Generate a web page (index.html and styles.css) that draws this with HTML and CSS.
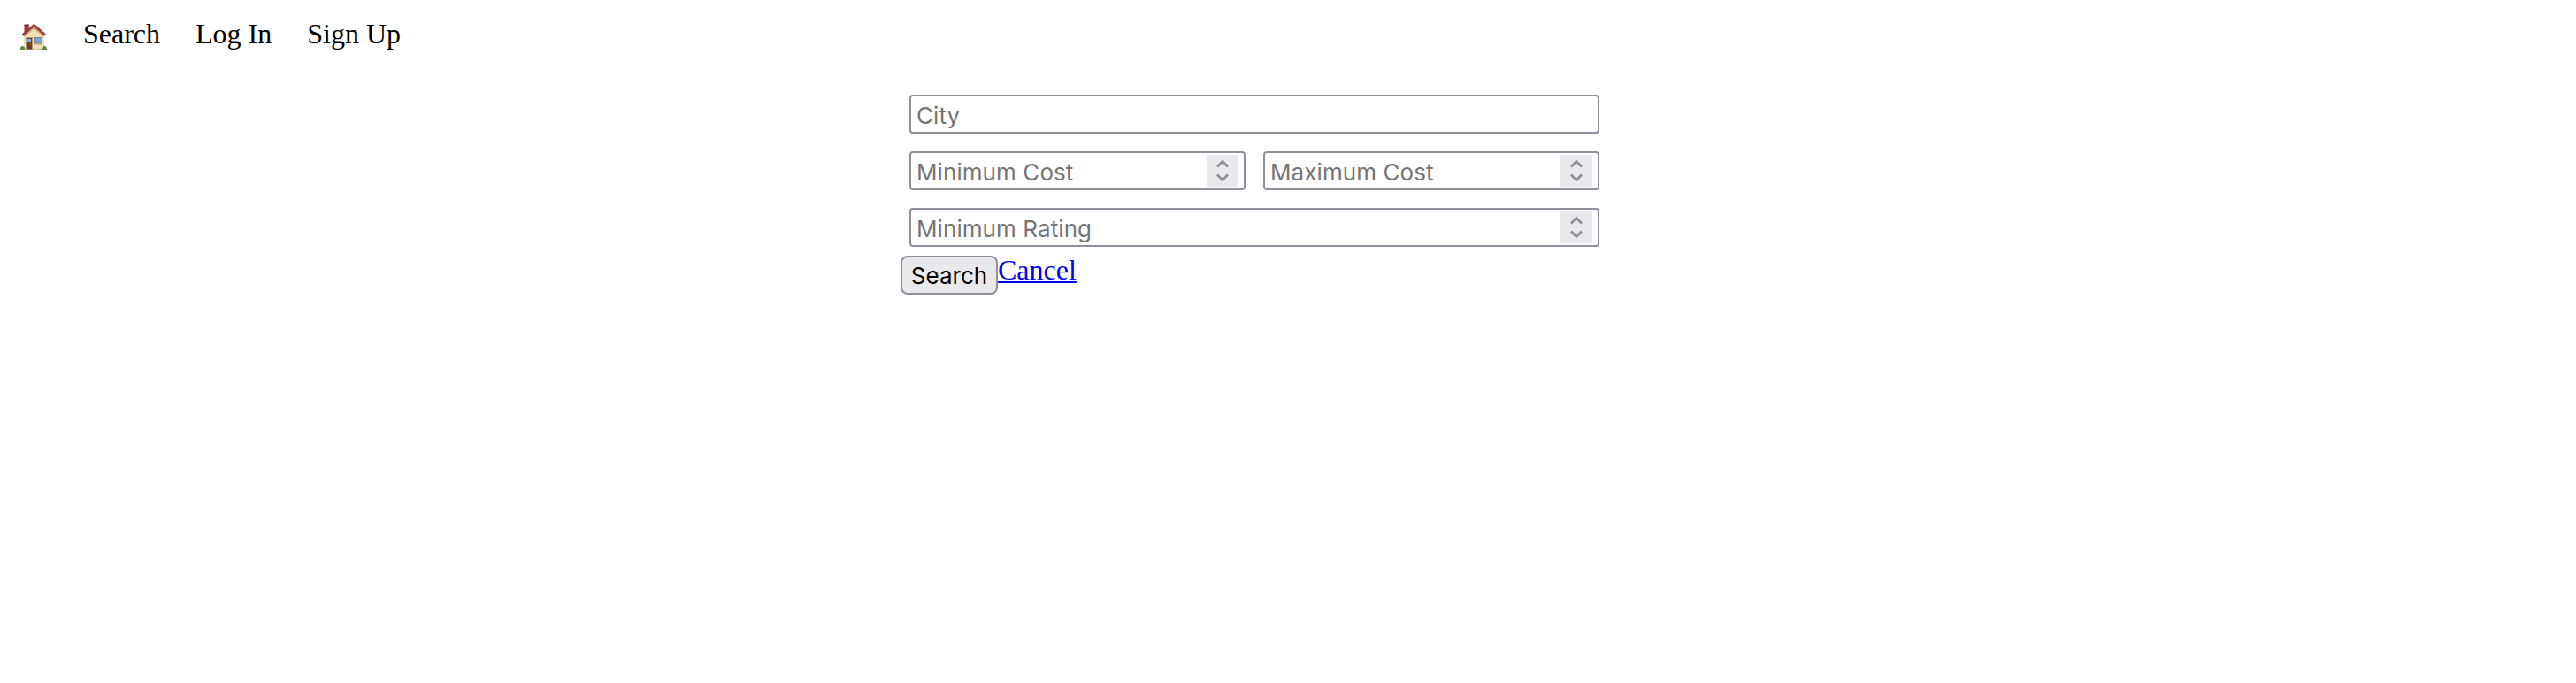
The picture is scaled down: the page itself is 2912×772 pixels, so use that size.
FILE: index.html
```html
<!DOCTYPE html>
<html lang="en">
<head>
<meta charset="utf-8">
<title>Search</title>
<link rel="stylesheet" href="styles.css">
</head>
<body>
<nav class="nav">
  <a class="home" href="#" aria-label="Home">
    <svg class="house" viewBox="0 0 30 30">
      <path d="M4.500 1h5v8l-5 4z" fill="#a93a2e"/>
      <path d="M4.500 .5h5.500v1.500h-5.500z" fill="#7d2b25"/>
      <path d="M4 13 15.500 3 27 13v16H4z" fill="#eedfbb"/>
      <path d="M4 13 15.500 3 27 13v2L15.500 5.500 4 15z" fill="#bda982"/>
      <path d="M2.500 12.500 15.500 1.500 28 12.500" fill="none" stroke="#672c2b" stroke-width="2.600"/>
      <path d="M3 12 15.500 1.500 27.500 12" fill="none" stroke="#d83e34" stroke-width="1.300"/>
      <path d="M6 15h8v14H6z" fill="#b29b7b"/>
      <path d="M7 16h6v13H7z" fill="#6b3925"/>
      <path d="M8 17h4v4H8z" fill="#79b5e8"/>
      <path d="M16 15h9v8h-9z" fill="#8c7c70"/>
      <path d="M17 16h7v5.500h-7z" fill="#70a8df"/>
      <path d="M16 22h9v1.500h-9z" fill="#c3a986"/>
      <circle cx="11.500" cy="23" r=".7" fill="#d7a545"/>
      <path d="M0 29q-.5-4 2.500-4T5 29zM25 29q0-4 2.500-4t2.500 4z" fill="#638647"/>
      <path d="M4 28.500h21v.7H4z" fill="#baa78b"/>
      <path d="M5 28.500h9V30H5z" fill="#968b84"/>
    </svg>
  </a>
  <a href="#">Search</a>
  <a href="#">Log In</a>
  <a href="#">Sign Up</a>
</nav>
<form class="form">
  <div class="row">
    <div class="field"><input class="input" type="text" placeholder="City"></div>
  </div>
  <div class="row">
    <div class="field"><input class="input" type="text" inputmode="numeric" placeholder="Minimum Cost">
      <span class="spinner"><svg viewBox="0 0 36 36"><path d="M12 13.500 18 7.500l6 6M12 22.500l6 6 6-6"/></svg></span></div>
    <div class="field"><input class="input" type="text" inputmode="numeric" placeholder="Maximum Cost">
      <span class="spinner"><svg viewBox="0 0 36 36"><path d="M12 13.500 18 7.500l6 6M12 22.500l6 6 6-6"/></svg></span></div>
  </div>
  <div class="row">
    <div class="field"><input class="input" type="text" inputmode="numeric" placeholder="Minimum Rating">
      <span class="spinner"><svg viewBox="0 0 36 36"><path d="M12 13.500 18 7.500l6 6M12 22.500l6 6 6-6"/></svg></span></div>
  </div>
  <div class="actions">
    <button class="submit" type="button">Search</button>
    <a class="cancel" href="#">Cancel</a>
  </div>
</form>
</body>
</html>
```
FILE: styles.css
```css
* { box-sizing: border-box; }
body {
  margin: 0;
  background: #fff;
  color: #000;
  font: 32px/36px "Liberation Serif", "Times New Roman", serif;
}
.nav {
  display: flex;
  align-items: flex-start;
  gap: 40px;
  padding: 20px 22.500px 0;
  height: 97px;
}
.nav a { color: #000; text-decoration: none; }
.nav .home { width: 31.500px; padding: 7px 0 0 .5px; line-height: 0; }
.house { width: 30px; height: 30px; display: block; }
.form { width: 800px; margin-left: 1018px; }
.row { display: flex; }
.field {
  display: flex;
  align-items: center;
  flex: 1;
  min-width: 0;
  height: 44px;
  margin: 10px;
  padding: 0 6px;
  border: 2px solid #8f8f9d;
  border-radius: 4px;
  background: #fff;
}
.input {
  flex: 1;
  min-width: 0;
  height: 38px;
  padding: 2px 0 0;
  border: 0;
  outline: 0;
  background: transparent;
  font: 26px/36px Inter, sans-serif;
  letter-spacing: .08px;
}
.input::placeholder { color: #757575; opacity: 1; }
.spinner { width: 36px; height: 36px; background: #e9e9ed; }
.spinner svg { display: block; width: 36px; height: 36px; }
.spinner path { fill: none; stroke: #8f8f9d; stroke-width: 2.800; }
.actions { display: flex; align-items: flex-start; }
.submit {
  width: 110px;
  height: 44px;
  padding: 2px 0 0;
  border: 2px solid #8f8f9d;
  border-radius: 8px;
  background: #e9e9ed;
  color: #000;
  font: 26px/36px Inter, sans-serif;
}
.cancel {
  color: #0000ee;
  line-height: 32px;
  text-decoration-thickness: 2px;
  text-underline-offset: 2px;
}
```
